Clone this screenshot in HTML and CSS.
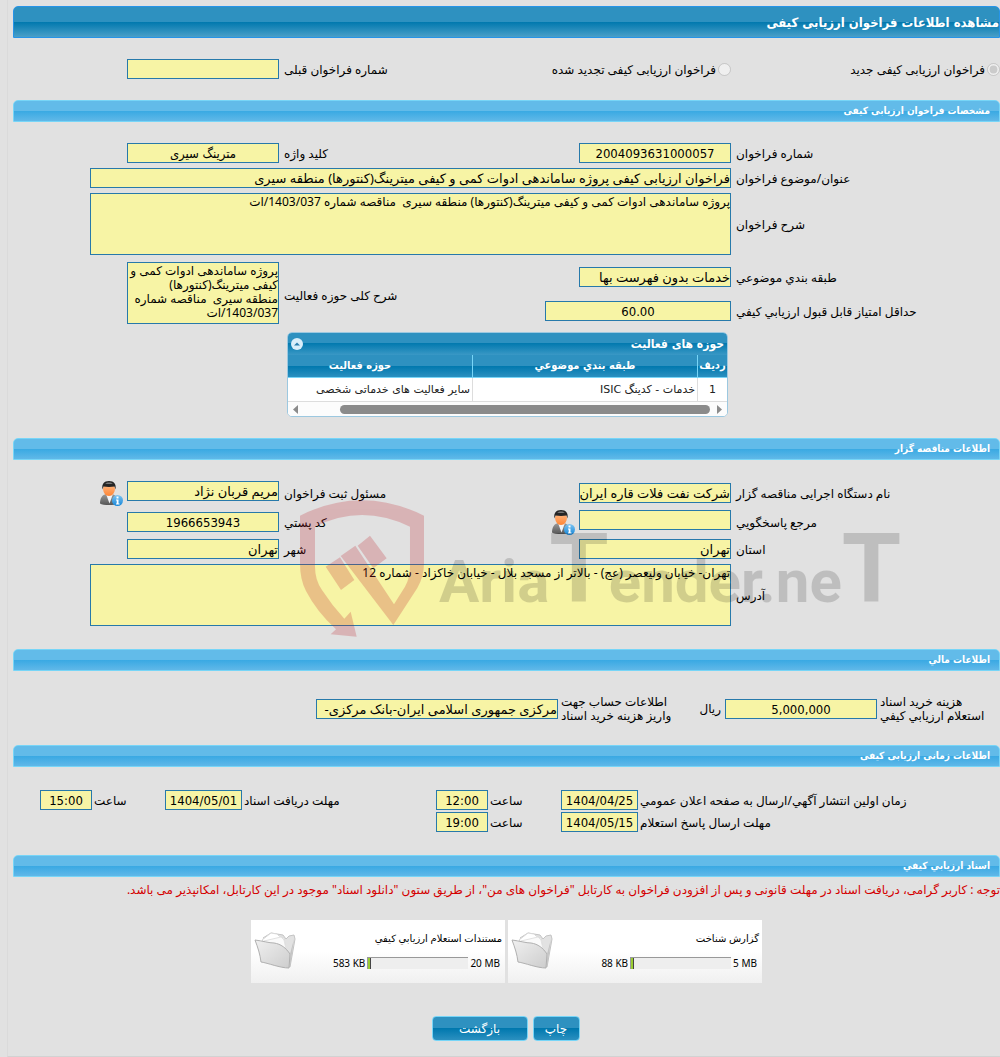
FILE: index.html
```html
<!DOCTYPE html>
<html lang="fa" dir="rtl">
<head>
<meta charset="utf-8">
<meta name="viewport" content="width=device-width, initial-scale=1">
<title>مشاهده اطلاعات فراخوان ارزیابی کیفی</title>
<link rel="stylesheet" href="styles.css">
</head>
<body>
<svg class="defs" aria-hidden="true">
  <defs>
    <linearGradient id="suit" x1="0" y1="0" x2="0" y2="1"><stop offset="0" stop-color="#9a9a9a"/><stop offset="1" stop-color="#565656"/></linearGradient>
    <linearGradient id="face" x1="0" y1="0" x2="0" y2="1"><stop offset="0" stop-color="#ffb57e"/><stop offset="1" stop-color="#ff8534"/></linearGradient>
    <linearGradient id="info" x1="0" y1="0" x2="0" y2="1"><stop offset="0" stop-color="#7cc4f2"/><stop offset="1" stop-color="#1686d8"/></linearGradient>
    <linearGradient id="flap" x1="0" y1="0" x2="1" y2="1"><stop offset="0" stop-color="#f0f0f0"/><stop offset="1" stop-color="#cdcdcd"/></linearGradient>
    <symbol id="person" viewBox="0 0 24 25">
      <path d="M1 22.500c0-6 2.500-8.500 6-9.500h6c4 1 6 4 6 9.500-3 2-15 2-18 0z" fill="url(#suit)"/>
      <path d="M7 13l3.500 9.500 3.500-9.500z" fill="#f2f4f7"/>
      <path d="M4 7c0 4.500 2.500 8 6 8s6-3.500 6-8l-2-3h-8z" fill="url(#face)"/>
      <path d="M3.500 8.500c-1-5.500 1.500-8.500 6.500-8.500s7.500 3 6.500 8.500l-1-3c-3 .5-8 .5-11 0z" fill="#252525"/>
      <path d="M6 2.500c2-1.500 6-1.500 8 0-2 .8-6 .8-8 0z" fill="#777"/>
      <circle cx="18.500" cy="19.500" r="5.500" fill="url(#info)"/>
      <path d="M17.500 15.500h2v2h-2zM17 18.500h2.500v4h1v1h-3.500v-1h.7v-3h-.7z" fill="#fff"/>
    </symbol>
    <symbol id="folder" viewBox="0 0 42 38">
      <path d="M9 7l8-5 12 2 3 4 3-3 5-1 1 4-5 28-9-6z" fill="#e2e2e2" stroke="#c4c4c4"/>
      <path d="M8 9l9-7 6 1 2 2 5 2 4 26z" fill="#fff" stroke="#d9d9d9"/>
      <path d="M10 10l17-4 3 3 4 18z" fill="#fafafa" stroke="#e2e2e2"/>
      <path d="M1 9c8 1 14 3 19 3 7 1 12 5 16 11l-1 14c-9 0-21-5-28-6-1-8-3-14-6-22z" fill="url(#flap)" stroke="#b0b0b0"/>
      <path d="M36 23l4-15-4 28z" fill="#c4c4c4"/>
    </symbol>
  </defs>
</svg>

<main class="page">
  <h1 class="title-bar">مشاهده اطلاعات فراخوان ارزیابی کیفی</h1>

  <div class="fields kind">
    <div class="choice"><input type="radio" id="kind-new" name="kind" checked disabled><label for="kind-new">فراخوان ارزیابی کیفی جدید</label></div>
    <div class="choice"><input type="radio" id="kind-renewed" name="kind" disabled><label for="kind-renewed">فراخوان ارزیابی کیفی تجدید شده</label></div>
    <label for="prev-no">شماره فراخوان قبلی</label>
    <input class="field" id="prev-no" type="text" readonly>
  </div>

  <section>
    <h2 class="section-bar">مشخصات فراخوان ارزیابی کیفی</h2>
    <div class="fields spec">
      <label for="call-no">شماره فراخوان</label>
      <input class="field center" id="call-no" type="text" value="2004093631000057" readonly>
      <label for="keyword">کلید واژه</label>
      <input class="field center" id="keyword" type="text" value="مترینگ سیری" readonly>
      <label for="subject">عنوان/موضوع فراخوان</label>
      <input class="field wide" id="subject" type="text" value="فراخوان ارزیابی کیفی پروژه ساماندهی ادوات کمی و کیفی میترینگ(کنتورها) منطقه سیری" readonly>
      <label for="desc">شرح فراخوان</label>
      <textarea class="field area wide" id="desc" readonly>پروژه ساماندهی ادوات کمی و کیفی میترینگ(کنتورها) منطقه سیری  مناقصه شماره 1403/037/ات</textarea>
    </div>
    <div class="fields scope">
      <label for="category">طبقه بندي موضوعي</label>
      <input class="field" id="category" type="text" value="خدمات بدون فهرست بها" readonly>
      <label class="tall" for="scope">شرح کلی حوزه فعالیت</label>
      <textarea class="field area tall" id="scope" readonly>پروژه ساماندهی ادوات کمی و
کیفی میترینگ(کنتورها)
منطقه سیری  مناقصه شماره
1403/037/ات</textarea>
      <label for="score">حداقل امتیاز قابل قبول ارزیابي کیفي</label>
      <input class="field score center" id="score" type="text" value="60.00" readonly>
    </div>

    <div class="grid-widget">
      <div class="grid-title">
        <h3>حوزه های فعالیت</h3>
        <button class="collapse" type="button" aria-label="بستن جدول"><svg viewBox="0 0 12 12"><circle cx="6" cy="6" r="6" fill="#d9eefa"/><path d="M3 7.500l3-3 3 3z" fill="#2a7fae"/></svg></button>
      </div>
      <table>
        <thead><tr><th class="num">ردیف</th><th>طبقه بندي موضوعي</th><th>حوزه فعالیت</th></tr></thead>
        <tbody><tr><td class="num">1</td><td>خدمات - کدینگ ISIC</td><td>سایر فعالیت های خدماتی شخصی</td></tr></tbody>
      </table>
      <div class="scrollbar">
        <svg class="arrow" viewBox="0 0 5 9"><path d="M0 0l5 4.500-5 4.500z"/></svg>
        <div class="track"><div class="thumb"></div></div>
        <svg class="arrow" viewBox="0 0 5 9"><path d="M5 0l-5 4.500 5 4.500z"/></svg>
      </div>
    </div>
  </section>

  <section class="owner">
    <h2 class="section-bar">اطلاعات مناقصه گزار</h2>
    <div class="fields organisation">
      <label for="org">نام دستگاه اجرایی مناقصه گزار</label>
      <input class="field" id="org" type="text" value="شرکت نفت فلات قاره ایران" readonly>
      <label for="clerk">مسئول ثبت فراخوان</label>
      <div class="with-icon"><input class="field" id="clerk" type="text" value="مریم قربان نژاد" readonly><svg class="person"><use href="#person"/></svg></div>
      <label for="contact">مرجع پاسخگویي</label>
      <div class="with-icon"><input class="field" id="contact" type="text" readonly><svg class="person"><use href="#person"/></svg></div>
      <label for="postcode">کد پستي</label>
      <input class="field center" id="postcode" type="text" value="1966653943" readonly>
      <label for="province">استان</label>
      <input class="field" id="province" type="text" value="تهران" readonly>
      <label for="city">شهر</label>
      <input class="field" id="city" type="text" value="تهران" readonly>
      <label for="address">آدرس</label>
      <textarea class="field area wide" id="address" readonly>تهران- خیابان ولیعصر (عج) - بالاتر از مسجد بلال - خیابان خاکزاد - شماره 12</textarea>
    </div>
    <svg class="watermark" viewBox="0 0 602 140" aria-hidden="true" direction="ltr">
      <g transform="scale(.33333) translate(-900 -207)" fill="#be1e28" opacity=".23">
        <path fill-rule="evenodd" d="M900 257Q1085 164 1272 257V400Q1272 440 1252 474L1180 585L1022 378L1066 347L1182 523L1215 470Q1230 444 1230 410V290Q1085 220 945 290V410Q945 450 966 480Q995 525 1033 566L1052 545L1070 620L992 613L1008 598Q950 545 918 483Q900 450 900 400Z"/>
        <path d="M1110 317L1160 385L1120 415L1073 347ZM1020 382L1063 450L1023 480L977 410Z"/>
      </g>
      <text class="wordmark" x="139" y="103">Aria<tspan class="tee">T</tspan>ender.ne<tspan class="tee">T</tspan></text>
    </svg>
  </section>

  <section>
    <h2 class="section-bar">اطلاعات مالي</h2>
    <div class="fields money">
      <label for="fee">هزینه خرید اسناد<br>استعلام ارزیابي کیفي</label>
      <div class="with-unit"><input class="field center" id="fee" type="text" value="5,000,000" readonly><span>ریال</span></div>
      <label for="account">اطلاعات حساب جهت<br>واریز هزینه خرید اسناد</label>
      <input class="field account" id="account" type="text" value="مرکزی جمهوری اسلامی ایران-بانک مرکزی-" readonly>
    </div>
  </section>

  <section>
    <h2 class="section-bar">اطلاعات زمانی ارزیابی کیفی</h2>
    <div class="fields times">
      <label for="pub-date">زمان اولین انتشار آگهي/ارسال به صفحه اعلان عمومي</label>
      <input class="field center" id="pub-date" type="text" value="1404/04/25" readonly>
      <label for="pub-time">ساعت</label>
      <input class="field center" id="pub-time" type="text" value="12:00" readonly>
      <label for="doc-date">مهلت دریافت اسناد</label>
      <input class="field center" id="doc-date" type="text" value="1404/05/01" readonly>
      <label for="doc-time">ساعت</label>
      <input class="field center" id="doc-time" type="text" value="15:00" readonly>
      <label class="new-row" for="reply-date">مهلت ارسال پاسخ استعلام</label>
      <input class="field center" id="reply-date" type="text" value="1404/05/15" readonly>
      <label for="reply-time">ساعت</label>
      <input class="field center" id="reply-time" type="text" value="19:00" readonly>
    </div>
  </section>

  <section>
    <h2 class="section-bar">اسناد ارزیابي کیفي</h2>
    <p class="notice">توجه : کاربر گرامی، دریافت اسناد در مهلت قانونی و پس از افزودن فراخوان به کارتابل "فراخوان های من"، از طریق ستون "دانلود اسناد" موجود در این کارتابل، امکانپذیر می باشد.</p>
    <div class="files">
      <article class="file">
        <div class="file-info">
          <h3>گزارش شناخت</h3>
          <div class="usage"><span dir="ltr">5 MB</span><div class="meter"><div class="used" style="width:3%"></div></div><span dir="ltr">88 KB</span></div>
        </div>
        <svg class="folder"><use href="#folder"/></svg>
      </article>
      <article class="file">
        <div class="file-info">
          <h3>مستندات استعلام ارزیابي کیفي</h3>
          <div class="usage"><span dir="ltr">20 MB</span><div class="meter"><div class="used" style="width:3%"></div></div><span dir="ltr">583 KB</span></div>
        </div>
        <svg class="folder"><use href="#folder"/></svg>
      </article>
    </div>
    <div class="actions">
      <button class="btn" type="button">چاپ</button>
      <button class="btn back" type="button">بازگشت</button>
    </div>
  </section>
</main>
</body>
</html>
```
FILE: styles.css
```css
* { box-sizing: border-box; }

body {
  margin: 0;
  background: #e1e1e1;
  color: #000;
  font: 12px/14px "Noto Sans", "DejaVu Sans", sans-serif;
}

h1, h2, h3, p { margin: 0; }

input, textarea, button { font-family: inherit; margin: 0; }

.defs { position: absolute; width: 0; height: 0; }

.page {
  margin-left: 7px;
  padding: 6px 0 15px 5px;
  border-left: 1px solid #dadada;
  border-bottom: 1px solid #d2d2d2;
}

.title-bar, .section-bar, .grid-title, .grid-widget th {
  color: #fff;
  font-family: "DejaVu Sans Condensed", "DejaVu Sans", sans-serif;
}

.title-bar {
  height: 32px;
  border: 1px solid #2694e8;
  border-radius: 5px 5px 0 0;
  background: linear-gradient(#2e91c0 50%, #0078ae 50%, #4a9fc8);
  font-size: 13px;
  line-height: 32px;
}

.section-bar {
  height: 22px;
  padding: 0 9px;
  border: 1px solid #77d5f7;
  border-radius: 5px 5px 0 0;
  background: linear-gradient(#62bbe9 50%, #39a9e3 50%, #60b8e8);
  font-size: 10px;
  line-height: 20px;
}

/* label / field pairs, two to a row */
.fields {
  display: grid;
  grid-template-columns: 269fr 302fr 150fr 266fr;
  row-gap: 5px;
  align-items: center;
}

.fields > label { text-align: left; padding: 2px 0 0 5px; white-space: nowrap; }

.kind { padding: 21px 0; }
.spec { padding-top: 21px; }
.scope { grid-template-rows: 30px 38px; row-gap: 0; margin-top: 7px; }
.organisation { padding: 21px 0 23px; }

.choice { display: flex; align-items: center; gap: 2px; }
.choice input { width: 13px; height: 13px; }
.choice label { padding-top: 2px; }

.field {
  width: 152px;
  height: 20px;
  padding: 0;
  border: 1px solid #2779aa;
  border-radius: 0;
  background: #f7f4a5;
  color: #000;
  font-size: 13px;
  outline: 0;
}

.field.center { text-align: center; font-family: "DejaVu Sans Condensed", "DejaVu Sans", sans-serif; }
.field.score { width: 186px; }
.field.account { width: 242px; }

.field.wide {
  grid-column: 2 / -1;
  width: auto;
  margin-left: 77px;
}

.field.area {
  display: block;
  height: 62px;
  padding: 1px 0;
  resize: none;
  overflow: hidden;
  font-size: 12px;
  line-height: 14px;
}

.scope .tall { grid-row: 1 / 3; }
.scope .area { align-self: start; }
.scope label.tall { grid-column: 3; padding-top: 0; }
.scope .area.tall { grid-column: 4; }

.with-icon { display: flex; align-items: flex-start; gap: 4px; height: 24px; }
.person { width: 24px; height: 25px; flex: none; }
.with-unit { display: flex; align-items: center; gap: 4px; }

/* activity table */
.grid-widget {
  width: 441px;
  margin: 2px 272px 21px auto;
  border: 1px solid #9cc8e0;
  border-radius: 5px;
  background: #fff;
  overflow: hidden;
}

.grid-title {
  display: flex;
  justify-content: space-between;
  align-items: center;
  height: 22px;
  padding: 0 3px;
  background: linear-gradient(#2e91c0 45%, #0078ae 45%, #3a98c5);
}

.grid-title h3 { font-size: 12px; }

.collapse { width: 12px; height: 12px; padding: 0; border: 0; background: none; }
.collapse svg { display: block; }

.grid-widget table {
  table-layout: fixed;
  width: 480px;
  border-collapse: separate;
  border-spacing: 0;
}

.grid-widget th {
  height: 23px;
  padding: 0 2px;
  border-left: 1px solid #77d5f7;
  border-bottom: 1px solid #77d5f7;
  background: linear-gradient(#2e91c0 50%, #0078ae 50%, #2b90c0);
  font-size: 11px;
  text-align: center;
}

.grid-widget td {
  height: 24px;
  padding: 0 2px;
  border-left: 1px solid #ddd;
  border-bottom: 1px solid #ddd;
  color: #222;
  font-family: "DejaVu Sans", sans-serif;
  font-size: 11px;
}

.grid-widget .num { width: 30px; padding: 0; text-align: center; }

.scrollbar { display: flex; align-items: center; gap: 7px; height: 14px; padding: 0 5px; background: #fcfcfc; }
.arrow { width: 5px; height: 9px; fill: #8b8b8b; }
.track { flex: 1; }
.thumb { width: 370px; height: 9px; border-radius: 5px; background: #8b8b8b; }

.owner { position: relative; }
.watermark { position: absolute; top: 61px; left: 287px; width: 602px; height: 140px; pointer-events: none; }
.wordmark {
  fill: #000;
  opacity: .15;
  font-family: Roboto, sans-serif;
  font-size: 60px;
  font-weight: bold;
}
.tee { font-size: 96px; }

.money { grid-template-columns: 123fr 202fr 117fr 545fr; padding: 24px 0 22px; }
.money > label { padding: 0 0 0 3px; }

.times {
  grid-template-columns: 362fr 77px 73fr 52px 194fr 77px 73fr 52px 27fr;
  row-gap: 2px;
  padding: 23px 0;
}
.times > label { padding-left: 2px; }
.times .field { width: auto; }
.times .new-row { grid-column: 1; }

.notice { padding: 6px 0; color: #d40000; }

.files { display: flex; justify-content: center; gap: 3px; margin: 17px 0 33px; }

.file {
  display: flex;
  justify-content: space-between;
  width: 254px;
  height: 63px;
  padding: 11px 3px 0;
  background: linear-gradient(#fff 50%, #f0f0f0);
  font-size: 10px;
}

.file h3 { font-size: 10px; font-weight: normal; }
.usage { display: flex; align-items: center; gap: 2px; margin-top: 11px; padding-right: 2px; }
.meter { width: 101px; height: 12px; border: 1px solid #999; border-width: 1px 0 0 1px; background: #eee; direction: ltr; }
.used { height: 11px; border-right: 1px solid #444; background: #9acd32; }
.folder { width: 42px; height: 38px; }

.actions { display: flex; justify-content: center; gap: 5px; padding-right: 2px; }

.btn {
  width: 47px;
  height: 25px;
  padding: 0;
  border: 1px solid #77d5f7;
  border-radius: 4px;
  background: linear-gradient(#2e91c0 50%, #0078ae 50%, #2b90c0);
  color: #fff;
  font-size: 12px;
}
.btn.back { width: 96px; }
```
